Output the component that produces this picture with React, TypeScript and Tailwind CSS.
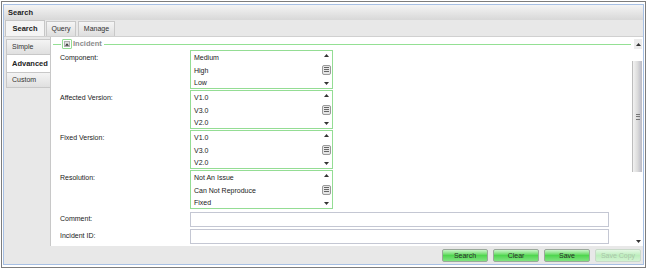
import type { ReactNode } from 'react'

const font = { fontFamily: '"Liberation Sans", Arial, sans-serif' }

function Arrow({ up, className = '' }: { up?: boolean; className?: string }) {
  return (
    <svg width="5" height="3" viewBox="0 0 5 3" className={className}>
      <path d={up ? 'M0 3 L2.5 0 L5 3 Z' : 'M0 0 L2.5 3 L5 0 Z'} fill="#333" />
    </svg>
  )
}

function Grip() {
  return (
    <div className="w-[9px] h-[10px] rounded-[2px] border border-[#9a9a9a] bg-[#e6e6e6] flex flex-col items-center justify-center gap-[1px]">
      <div className="w-[5px] h-px bg-[#666]" />
      <div className="w-[5px] h-px bg-[#666]" />
      <div className="w-[5px] h-px bg-[#666]" />
    </div>
  )
}

function ListBox({ items }: { items: string[] }) {
  return (
    <div className="w-[143px] h-[39px] border border-[#94dd94] bg-white flex">
      <div className="flex-1 pl-[3px] pt-px">
        {items.map((it) => (
          <div key={it} className="h-[12.5px] leading-[12.5px] text-[7px] text-[#1a1a1a]">
            {it}
          </div>
        ))}
      </div>
      <div className="w-[11px] flex flex-col items-center py-[3px] justify-between">
        <Arrow up />
        <Grip />
        <Arrow />
      </div>
    </div>
  )
}

function Row({ label, children, top }: { label: string; children: ReactNode; top?: boolean }) {
  return (
    <div className={`flex ${top ? 'items-start' : 'items-center'}`}>
      <div className={`w-[137px] pl-[7px] text-[7px] text-[#1a1a1a] ${top ? 'pt-[3px]' : ''}`}>{label}</div>
      {children}
    </div>
  )
}

function Input() {
  return <div className="w-[419px] h-[15px] border border-[#c4c7d3] bg-white" />
}

function Btn({ label, disabled }: { label: string; disabled?: boolean }) {
  return (
    <button
      className={`w-[46px] h-[13px] rounded-[2px] border text-[7px] leading-none ${
        disabled
          ? 'border-[#c9d9c9] bg-linear-to-b from-[#e4f8e4] via-[#bdeebd] to-[#d2f4d2] text-[#a9c6a9]'
          : 'border-[#9aa89a] bg-linear-to-b from-[#c8f5c8] via-[#4fd64f] to-[#7fe47f] text-[#2a2a2a]'
      }`}
    >
      {label}
    </button>
  )
}

export default function App() {
  return (
    <div className="w-[647px] h-[269px] bg-white pl-[1px] pt-[1px]" style={font}>
      <div className="w-[645px] h-[267px] border border-[#7d7d7d] pt-[2px] pl-[1px] pr-[1px] pb-[2px]">
        <div className="h-full border border-[#a7c0e4] flex flex-col bg-[#e8e8e8]">
          {/* header */}
          <div className="h-[15px] bg-linear-to-b from-[#f4f4f4] to-[#d8d8d8] pl-[4px] flex items-center text-[7.5px] font-bold text-[#222]">
            Search
          </div>

          {/* top tabs */}
          <div className="h-[17px] flex items-end gap-[1px] pl-[1px] border-b border-[#d0d0d0] bg-[#e8e8e8]">
            <div className="w-[40px] h-[16px] bg-[#f5f5f5] border border-b-0 border-[#c6c6c6] flex items-center justify-center text-[7.5px] font-bold text-[#222]">
              Search
            </div>
            <div className="w-[30px] h-[15px] bg-linear-to-b from-[#f5f5f5] to-[#dedede] border border-b-0 border-[#c8c8c8] flex items-center justify-center text-[7px] text-[#333]">
              Query
            </div>
            <div className="w-[37px] h-[15px] ml-[1px] bg-linear-to-b from-[#f5f5f5] to-[#dedede] border border-b-0 border-[#c8c8c8] flex items-center justify-center text-[7px] text-[#333]">
              Manage
            </div>
          </div>

          {/* body */}
          <div className="flex-1 flex min-h-0">
            <div className="w-[46px] pt-[2px] pl-[2px] flex flex-col">
              <div className="h-[16px] bg-linear-to-b from-[#f4f4f4] to-[#e0e0e0] border border-r-0 border-[#c8c8c8] pl-[5px] flex items-center text-[7px] text-[#333]">
                Simple
              </div>
              <div className="h-[17px] bg-white border-l border-[#c8c8c8] pl-[5px] flex items-center text-[7.5px] font-bold text-[#222]">
                Advanced
              </div>
              <div className="h-[16px] bg-linear-to-b from-[#f4f4f4] to-[#e0e0e0] border border-r-0 border-[#c8c8c8] pl-[5px] flex items-center text-[7px] text-[#333]">
                Custom
              </div>
            </div>

            <div className="flex-1 bg-white border-l border-[#c8c8c8] flex overflow-hidden">
              <div className="flex-1 pt-[2px] pl-[2px] flex flex-col gap-px overflow-hidden">
                {/* fieldset legend */}
                <div className="h-[10px] flex items-center">
                  <div className="w-[8px] h-px bg-[#94e094]" />
                  <div className="w-[10px] h-[10px] ml-[1px] border border-[#94dd94] rounded-[1px] flex items-center justify-center">
                    <div className="w-[6px] h-[6px] bg-[#e2e2e2] border border-[#b0b0b0] flex items-center justify-center">
                      <Arrow up />
                    </div>
                  </div>
                  <span className="ml-[1px] text-[7.5px] font-bold text-[#8c8c8c]">Incident</span>
                  <div className="flex-1 h-px ml-[2px] bg-[#94e094]" />
                </div>

                <div className="flex flex-col gap-px">
                  <Row label="Component:" top>
                    <ListBox items={['Medium', 'High', 'Low']} />
                  </Row>
                  <Row label="Affected Version:" top>
                    <ListBox items={['V1.0', 'V3.0', 'V2.0']} />
                  </Row>
                  <Row label="Fixed Version:" top>
                    <ListBox items={['V1.0', 'V3.0', 'V2.0']} />
                  </Row>
                  <Row label="Resolution:" top>
                    <ListBox items={['Not An Issue', 'Can Not Reproduce', 'Fixed']} />
                  </Row>
                </div>
                <div className="flex flex-col gap-[2px] mt-[2px]">
                  <Row label="Comment:">
                    <Input />
                  </Row>
                  <Row label="Incident ID:">
                    <Input />
                  </Row>
                  <Row label="">
                    <Input />
                  </Row>
                </div>
              </div>

              {/* page scrollbar */}
              <div className="w-[12px] flex flex-col items-end pr-px pt-[2px] pb-[3px]">
                <div className="w-[8px] h-[10px] bg-[#ececec] flex items-center justify-center">
                  <Arrow up />
                </div>
                <div className="h-[12px]" />
                <div className="w-[10px] h-[111px] border-l border-[#bdbdbd] bg-linear-to-r from-[#f2f2f2] via-[#dcdcdc] to-[#b9b9c4] flex items-center justify-center">
                  <div className="w-[4px] h-[6px] flex flex-col justify-between">
                    <div className="h-px bg-[#777]" />
                    <div className="h-px bg-[#777]" />
                    <div className="h-px bg-[#777]" />
                  </div>
                </div>
                <div className="flex-1" />
                <div className="w-[8px] flex justify-center">
                  <Arrow />
                </div>
              </div>
            </div>
          </div>

          {/* buttons */}
          <div className="h-[18px] flex items-center justify-end gap-[5px] pr-[2px]">
            <Btn label="Search" />
            <Btn label="Clear" />
            <Btn label="Save" />
            <Btn label="Save Copy" disabled />
          </div>
        </div>
      </div>
    </div>
  )
}
